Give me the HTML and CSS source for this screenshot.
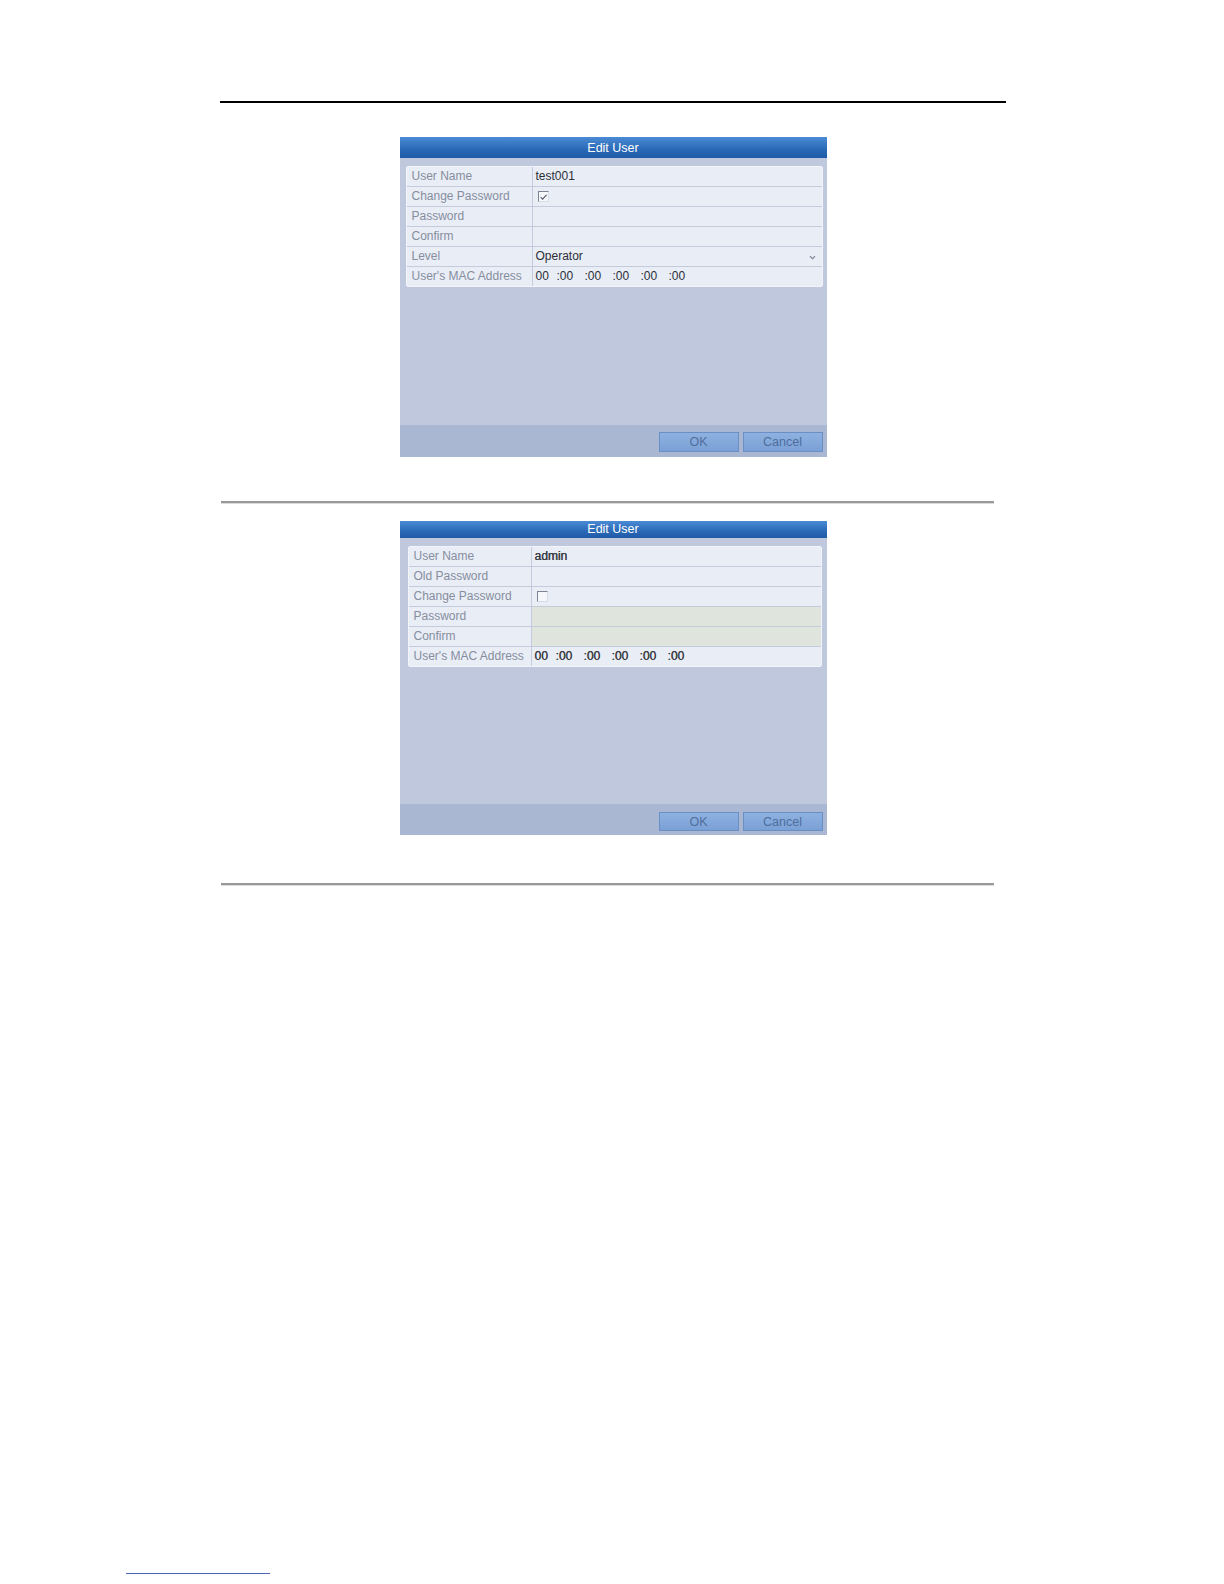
FILE: index.html
```html
<!DOCTYPE html>
<html>
<head>
<meta charset="utf-8">
<title>Edit User</title>
<link rel="stylesheet" href="styles.css">
</head>
<body>
<div class="page">
  <div class="rule-top"></div>

  <div class="dialog d1">
    <div class="dlg-title">Edit User</div>
    <div class="fields">
      <div class="row"><div class="lbl">User Name</div><div class="val">test001</div></div>
      <div class="row"><div class="lbl">Change Password</div><div class="val"><span class="cbox checked"><svg viewBox="0 0 10 10" width="10" height="10"><path d="M1.8 5 L4 7.4 L8.4 2.6" fill="none" stroke="#4f5565" stroke-width="1.2"/></svg></span></div></div>
      <div class="row"><div class="lbl">Password</div><div class="val"></div></div>
      <div class="row"><div class="lbl">Confirm</div><div class="val"></div></div>
      <div class="row"><div class="lbl">Level</div><div class="val select"><span>Operator</span><svg class="caret" viewBox="0 0 8 6" width="7" height="5"><path d="M1 1.5 L4 4.5 L7 1.5" fill="none" stroke="#7d8394" stroke-width="1.3"/></svg></div></div>
      <div class="row"><div class="lbl">User's MAC Address</div><div class="val mac"><span class="m0">00</span><span class="mn">:00</span><span class="mn">:00</span><span class="mn">:00</span><span class="mn">:00</span><span class="mn">:00</span></div></div>
    </div>
    <div class="dlg-space"></div>
    <div class="dlg-foot">
      <div class="btn">OK</div>
      <div class="btn">Cancel</div>
    </div>
  </div>

  <div class="rule-gray r1"></div>

  <div class="dialog d2">
    <div class="dlg-title">Edit User</div>
    <div class="fields">
      <div class="row"><div class="lbl">User Name</div><div class="val strong">admin</div></div>
      <div class="row"><div class="lbl">Old Password</div><div class="val"></div></div>
      <div class="row"><div class="lbl">Change Password</div><div class="val"><span class="cbox"></span></div></div>
      <div class="row"><div class="lbl">Password</div><div class="val disabled"></div></div>
      <div class="row"><div class="lbl">Confirm</div><div class="val disabled"></div></div>
      <div class="row"><div class="lbl">User's MAC Address</div><div class="val mac strong"><span class="m0">00</span><span class="mn">:00</span><span class="mn">:00</span><span class="mn">:00</span><span class="mn">:00</span><span class="mn">:00</span></div></div>
    </div>
    <div class="dlg-space"></div>
    <div class="dlg-foot">
      <div class="btn">OK</div>
      <div class="btn">Cancel</div>
    </div>
  </div>

  <div class="rule-gray r2"></div>
</div>
<div class="footnote-rule"></div>
</body>
</html>
```

FILE: styles.css
```css
html, body {
  margin: 0;
  padding: 0;
  background: #ffffff;
}
body {
  font-family: "Liberation Sans", Arial, sans-serif;
  width: 1224px;
  height: 1584px;
  overflow: hidden;
}
.page {
  margin-left: 220px;
  width: 786px;
  padding-top: 101px;
}
.rule-top {
  height: 2px;
  background: #000;
  width: 786px;
}
.rule-gray {
  height: 2px;
  background: #999999;
  width: 773px;
  margin-left: 1px;
  box-shadow: 0 1px 0 #dcdcdc;
}
.r1 { margin-top: 44px; }
.r2 { margin-top: 48px; }

.dialog {
  width: 427px;
  margin-left: auto;
  margin-right: auto;
  background: #c0c8de;
  display: flex;
  flex-direction: column;
}
.d1 { margin-top: 34px; height: 320px; }
.d2 { margin-top: 18px; height: 314px; }

.dlg-title {
  background: linear-gradient(#4b8ad4, #2a69b6 60%, #1f5aa6);
  color: #ffffff;
  font-size: 12.5px;
  text-align: center;
}
.d1 .dlg-title { height: 21px; line-height: 22px; }
.d2 .dlg-title { height: 17px; line-height: 17px; }

.fields {
  margin: 8px 4px 0 6px;
  background: #f4f6fb;
  border: 1px solid #f2f4fa;
  border-radius: 2px;
}
.d2 .fields { margin-left: 8px; margin-right: 5px; }
.row {
  display: flex;
  height: 19px;
  border-bottom: 1px solid #c4cbdc;
  font-size: 12px;
}
.row:last-child { border-bottom: none; }
.lbl {
  width: 120px;
  flex: none;
  padding-left: 5px;
  color: #868d9e;
  line-height: 19px;
  border-right: 1px solid #c4cbdc;
  background: #e9edf6;
  white-space: nowrap;
}
.d2 .lbl { width: 117px; }
.val {
  flex: 1;
  padding-left: 3px;
  color: #2c2f36;
  line-height: 19px;
  background: #e9edf6;
  display: flex;
  align-items: center;
}
.val.strong { color: #3a3d44; text-shadow: 0.35px 0 0 #3a3d44; }
.val.disabled { background: #dfe4dc; }
.select { justify-content: space-between; padding-right: 6px; }
.caret { margin-top: 1px; }

.cbox {
  width: 9px;
  height: 9px;
  border-top: 1px solid #7d8494;
  border-left: 1px solid #7d8494;
  border-right: 1px solid #d8dce6;
  border-bottom: 1px solid #d8dce6;
  background: #f6f7fb;
  display: inline-flex;
  align-items: center;
  justify-content: center;
  margin-left: 2px;
}
.cbox svg { display: block; }

.mac span { display: inline-block; }
.mac .m0 { width: 21px; }
.mac .mn { width: 28px; }

.dlg-space { flex: 1; }
.dlg-foot {
  background: #a9b7d3;
  display: flex;
  justify-content: flex-end;
  gap: 4px;
  padding-right: 4px;
}
.d1 .dlg-foot { height: 32px; padding-top: 7px; box-sizing: border-box; }
.d2 .dlg-foot { height: 31px; padding-top: 8px; box-sizing: border-box; }
.btn {
  width: 78px;
  height: 18px;
  line-height: 19px;
  border: 1px solid #6a8fc4;
  background: linear-gradient(#8eb1e0, #7aa0d6);
  color: #506e9c;
  font-size: 12.5px;
  text-align: center;
}
.d2 .btn { height: 17px; line-height: 18px; }

.footnote-rule {
  position: absolute;
  left: 126px;
  top: 1573px;
  width: 144px;
  height: 1px;
  background: #4a64b0;
}
```
